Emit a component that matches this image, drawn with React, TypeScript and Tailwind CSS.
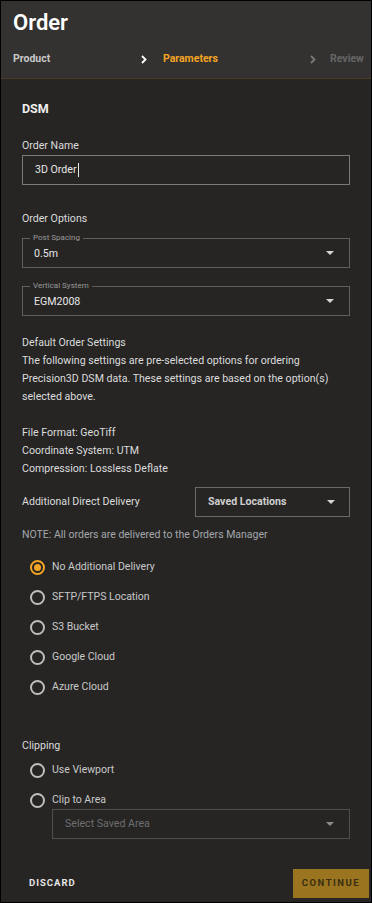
import React, { useState } from 'react';

const FONT = { fontFamily: 'Roboto, "Liberation Sans", sans-serif' };

const Caret = ({ className = '' }: { className?: string }) => (
  <svg width="8" height="4" viewBox="0 0 8 4" className={className}>
    <path d="M0 0 L8 0 L4 4 Z" fill="currentColor" />
  </svg>
);

const Chevron = ({ className = '' }: { className?: string }) => (
  <svg width="6" height="9" viewBox="0 0 6 9" className={className}>
    <path d="M1 1 L4.5 4.5 L1 8" fill="none" stroke="currentColor" strokeWidth="1.8" />
  </svg>
);

const Radio = ({ checked, label, onClick, h = 'h-[30px]' }: { checked: boolean; label: string; onClick: () => void; h?: string }) => (
  <div className={`flex items-center ${h} pl-[8px] cursor-pointer`} onClick={onClick}>
    <span
      className={`w-[15px] h-[15px] shrink-0 rounded-full border-2 flex items-center justify-center ${
        checked ? 'border-[#f5a524]' : 'border-[#bdbdbd]'
      }`}
    >
      {checked && <span className="w-[7px] h-[7px] rounded-full bg-[#f5a524]" />}
    </span>
    <span className="ml-[7px] text-[10.5px] text-[#c9c9c9]">{label}</span>
  </div>
);

const FieldSelect = ({ legend, value }: { legend: string; value: string }) => (
  <div className="relative h-[30px] border border-[#5f5f5f] flex items-center justify-between pl-[11px] pr-[15px]">
    <span className="absolute -top-[6px] left-[7px] px-[3px] bg-[#262524] text-[8px] leading-[10px] text-[#9a9a9a]">
      {legend}
    </span>
    <span className="text-[10.6px] text-[#e6e6e6] pt-[2px]">{value}</span>
    <Caret className="text-[#d6d6d6]" />
  </div>
);

export default function App() {
  const [delivery, setDelivery] = useState('none');
  const [clip, setClip] = useState('');

  const deliveries = [
    { id: 'none', label: 'No Additional Delivery' },
    { id: 'sftp', label: 'SFTP/FTPS Location' },
    { id: 's3', label: 'S3 Bucket' },
    { id: 'gcs', label: 'Google Cloud' },
    { id: 'azure', label: 'Azure Cloud' },
  ];

  return (
    <div style={FONT} className="w-[372px] h-[903px] border border-black bg-[#262524] flex flex-col overflow-hidden">
      {/* Header */}
      <div className="h-[78px] bg-[#333231] border-b border-[#4a3c24] flex flex-col">
        <div className="pl-[12px] pt-[8px] text-[22px] leading-[28px] font-semibold text-white">Order</div>
        <div className="flex items-center mt-[15px] text-[10.5px] font-bold leading-[14px]">
          <span className="pl-[12px] w-[140px] text-[#c8c8c8]">Product</span>
          <Chevron className="text-white" />
          <span className="ml-[16px] w-[147px] text-[#f5a524]">Parameters</span>
          <Chevron className="text-[#7a7a7a]" />
          <span className="ml-[14px] text-[#666666]">Review</span>
        </div>
      </div>

      {/* Body */}
      <div className="px-[21px] pt-[21px] flex flex-col text-[10.6px] leading-[18px] text-[#dcdcdc]">
        <div className="text-[12.5px] font-bold text-[#eeeeee]">DSM</div>

        <div className="mt-[19px]">Order Name</div>
        <div className="h-[30px] border border-[#7a7a7a] flex items-center pl-[12px] text-[#e8e8e8]">
          3D Order<span className="w-px h-[14px] bg-[#e8e8e8] ml-px" />
        </div>

        <div className="mt-[25px]">Order Options</div>
        <div className="mt-[10px]">
          <FieldSelect legend="Post Spacing" value="0.5m" />
        </div>
        <div className="mt-[18px]">
          <FieldSelect legend="Vertical System" value="EGM2008" />
        </div>

        <div className="mt-[18px]">
          <div>Default Order Settings</div>
          <div>The following settings are pre-selected options for ordering</div>
          <div>Precision3D DSM data. These settings are based on the option(s)</div>
          <div>selected above.</div>
          <div className="h-[18px]" />
          <div>File Format: GeoTiff</div>
          <div>Coordinate System: UTM</div>
          <div>Compression: Lossless Deflate</div>
        </div>

        <div className="mt-[9px] flex items-center justify-between">
          <span>Additional Direct Delivery</span>
          <div className="w-[155px] h-[30px] border border-[#6a6a6a] flex items-center justify-between pl-[12px] pr-[14px]">
            <span className="font-bold text-[#cfcfcf]">Saved Locations</span>
            <Caret className="text-[#d6d6d6]" />
          </div>
        </div>

        <div className="mt-[9px] text-[10.5px] text-[#a3a7ab]">NOTE: All orders are delivered to the Orders Manager</div>

        <div className="mt-[8px] flex flex-col">
          {deliveries.map((d) => (
            <Radio key={d.id} checked={delivery === d.id} label={d.label} onClick={() => setDelivery(d.id)} />
          ))}
        </div>

        <div className="mt-[35px]">Clipping</div>
        <div className="mt-[6px] flex flex-col gap-[12px]">
          <Radio h="h-[18px]" checked={clip === 'viewport'} label="Use Viewport" onClick={() => setClip('viewport')} />
          <Radio h="h-[18px]" checked={clip === 'area'} label="Clip to Area" onClick={() => setClip('area')} />
        </div>
        <div className="ml-[30px] h-[30px] border border-[#4f4f4f] flex items-center justify-between pl-[12px] pr-[15px]">
          <span className="text-[#6e6e6e]">Select Saved Area</span>
          <Caret className="text-[#8a8a8a]" />
        </div>
      </div>

      {/* Footer */}
      <div className="mt-auto flex items-center justify-between pl-[28px] pr-[2px] pb-[4px]">
        <button className="text-[9.5px] font-bold tracking-[1px] text-[#e6e6e6]">DISCARD</button>
        <button className="w-[76px] h-[29px] bg-[#9b741f] text-[9.5px] font-bold tracking-[1.5px] text-[#3a2e14]">
          CONTINUE
        </button>
      </div>
    </div>
  );
}
